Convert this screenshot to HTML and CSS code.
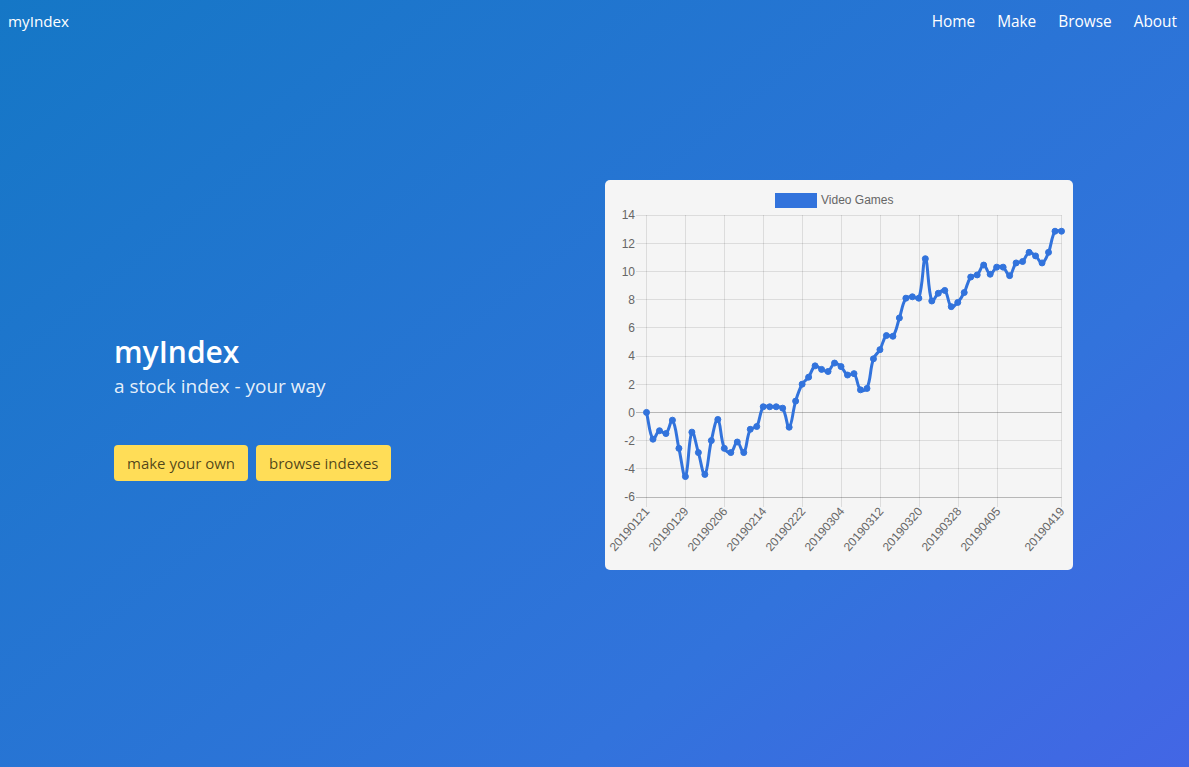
FILE: index.html
```html
<!DOCTYPE html>
<html lang="en">
<head>
<meta charset="utf-8">
<title>myIndex</title>
<link rel="stylesheet" href="styles.css">
</head>
<body>
<div class="hero">
  <nav class="navbar">
    <a class="brand" href="#">myIndex</a>
    <div class="nav-end">
      <a class="nav-item" href="#">Home</a>
      <a class="nav-item" href="#">Make</a>
      <a class="nav-item" href="#">Browse</a>
      <a class="nav-item" href="#">About</a>
    </div>
  </nav>
  <main class="hero-body">
    <div class="container">
      <div class="column intro">
        <h1 class="title">myIndex</h1>
        <h2 class="subtitle">a stock index - your way</h2>
        <div class="buttons">
          <a class="button" href="#">make your own</a>
          <a class="button" href="#">browse indexes</a>
        </div>
      </div>
      <div class="column">
        <div class="chart-card">
          <svg class="chart" id="chart" width="468" height="390" viewBox="0 0 468 390">
            <g class="legend">
              <rect x="171.5" y="14.5" width="39" height="12" class="legend-box"/>
              <text x="216" y="24" class="chart-text">Video Games</text>
            </g>
            <g class="grid">
              <line x1="31" y1="35.5" x2="456.5" y2="35.5"/>
              <line x1="31" y1="63.5" x2="456.5" y2="63.5"/>
              <line x1="31" y1="91.5" x2="456.5" y2="91.5"/>
              <line x1="31" y1="119.5" x2="456.5" y2="119.5"/>
              <line x1="31" y1="147.5" x2="456.5" y2="147.5"/>
              <line x1="31" y1="176.5" x2="456.5" y2="176.5"/>
              <line x1="31" y1="204.5" x2="456.5" y2="204.5"/>
              <line x1="31" y1="260.5" x2="456.5" y2="260.5"/>
              <line x1="31" y1="288.5" x2="456.5" y2="288.5"/>
              <line x1="41.5" y1="35" x2="41.5" y2="327"/>
              <line x1="80.5" y1="35" x2="80.5" y2="327"/>
              <line x1="119.5" y1="35" x2="119.5" y2="327"/>
              <line x1="158.5" y1="35" x2="158.5" y2="327"/>
              <line x1="197.5" y1="35" x2="197.5" y2="327"/>
              <line x1="236.5" y1="35" x2="236.5" y2="327"/>
              <line x1="275.5" y1="35" x2="275.5" y2="327"/>
              <line x1="314.5" y1="35" x2="314.5" y2="327"/>
              <line x1="353.5" y1="35" x2="353.5" y2="327"/>
              <line x1="392.5" y1="35" x2="392.5" y2="327"/>
              <line x1="456.5" y1="35" x2="456.5" y2="327"/>
            </g>
            <g class="axis-dark">
              <line x1="31" y1="232.5" x2="456.5" y2="232.5"/>
              <line x1="31" y1="317.5" x2="456.5" y2="317.5"/>
            </g>
            <g class="y-labels chart-text">
              <text x="30" y="39.3">14</text>
              <text x="30" y="67.5">12</text>
              <text x="30" y="95.7">10</text>
              <text x="30" y="123.9">8</text>
              <text x="30" y="152.1">6</text>
              <text x="30" y="180.3">4</text>
              <text x="30" y="208.5">2</text>
              <text x="30" y="236.7">0</text>
              <text x="30" y="264.9">-2</text>
              <text x="30" y="293.1">-4</text>
              <text x="30" y="321.3">-6</text>
            </g>
            <g class="x-labels chart-text">
              <text transform="translate(42 329) rotate(-49)" y="4">20190121</text>
              <text transform="translate(81 329) rotate(-49)" y="4">20190129</text>
              <text transform="translate(120 329) rotate(-49)" y="4">20190206</text>
              <text transform="translate(159 329) rotate(-49)" y="4">20190214</text>
              <text transform="translate(198 329) rotate(-49)" y="4">20190222</text>
              <text transform="translate(237 329) rotate(-49)" y="4">20190304</text>
              <text transform="translate(276 329) rotate(-49)" y="4">20190312</text>
              <text transform="translate(315 329) rotate(-49)" y="4">20190320</text>
              <text transform="translate(354 329) rotate(-49)" y="4">20190328</text>
              <text transform="translate(393 329) rotate(-49)" y="4">20190405</text>
              <text transform="translate(457 329) rotate(-49)" y="4">20190419</text>
            </g>
            <g id="series" class="series"></g>
          </svg>
        </div>
      </div>
    </div>
  </main>
</div>
<script src="script.js"></script>
</body>
</html>
```

FILE: styles.css
```css
* { box-sizing: border-box; }
html, body { margin: 0; padding: 0; }
body {
  font-family: "Segoe UI", "Open Sans", "Noto Sans", sans-serif;
  color: #fff;
}
a { text-decoration: none; color: inherit; }
.hero {
  min-height: 100vh;
  background-image: linear-gradient(141deg, #1577c6 0%, #3273dc 71%, #4366e5 100%);
  display: flex;
  flex-direction: column;
}
.navbar {
  height: 42px;
  display: flex;
  align-items: center;
  justify-content: space-between;
}
.brand {
  padding: 0 8px;
  font-size: 15.2px;
  color: #fff;
}
.nav-end { display: flex; padding-right: 1px; }
.nav-item {
  padding: 0 11px;
  font-size: 15.4px;
  color: #fff;
}
.hero-body {
  padding-top: 138px;
}
.container {
  width: 959px;
  margin: 0 0 0 114px;
  display: flex;
  gap: 23px;
  align-items: flex-start;
}
.column { flex: 0 0 468px; }
.intro { padding-top: 154px; }
.title {
  margin: 0;
  font-size: 30px;
  line-height: 36px;
  font-weight: 600;
  color: #fff;
}
.subtitle {
  margin: 4px 0 0;
  font-size: 19px;
  line-height: 25px;
  font-weight: 400;
  color: rgba(255, 255, 255, 0.9);
}
.buttons {
  margin-top: 46px;
  display: flex;
  gap: 8px;
}
.button {
  display: inline-flex;
  align-items: center;
  height: 36px;
  padding: 0 13px;
  border-radius: 4px;
  background: #ffdd57;
  color: rgba(0, 0, 0, 0.7);
  font-size: 15px;
}
.chart-card {
  width: 468px;
  height: 390px;
  background: #f5f5f5;
  border-radius: 5px;
  overflow: hidden;
}
.chart { display: block; }
.chart-text {
  font-family: "Liberation Sans", Arial, sans-serif;
  font-size: 12px;
  fill: #666;
}
.y-labels text { text-anchor: end; }
.x-labels text { text-anchor: end; }
.legend-box { fill: #3273dc; stroke: #3273dc; stroke-width: 3; }
.grid line { stroke: rgba(0, 0, 0, 0.1); stroke-width: 1; }
.axis-dark line { stroke: rgba(0, 0, 0, 0.25); stroke-width: 1; }
.series path { fill: none; stroke: #3273dc; stroke-width: 3; }
.series circle { fill: #3273dc; stroke: #3273dc; stroke-width: 1; }
```

FILE: script.js
```js
(function () {
  var data = [0, -1.9, -1.3, -1.5, -0.55, -2.55, -4.55, -1.4, -2.85, -4.4,
    -2.0, -0.5, -2.55, -2.85, -2.1, -2.85, -1.2, -1.0, 0.4, 0.4,
    0.4, 0.3, -1.05, 0.8, 2.0, 2.5, 3.3, 3.05, 2.9, 3.5,
    3.25, 2.65, 2.75, 1.6, 1.7, 3.8, 4.45, 5.45, 5.4, 6.7,
    8.1, 8.2, 8.1, 10.9, 7.9, 8.45, 8.65, 7.5, 7.8, 8.5,
    9.6, 9.75, 10.45, 9.8, 10.3, 10.3, 9.7, 10.6, 10.7, 11.35,
    11.1, 10.6, 11.35, 12.85, 12.85];
  var NS = "http://www.w3.org/2000/svg";
  var g = document.getElementById("series");
  var x0 = 41.5, step = 415 / (data.length - 1);
  var pts = data.map(function (v, i) {
    return { x: x0 + i * step, y: 35 + (14 - v) * 14.1 };
  });
  var t = 0.4;
  var cps = pts.map(function (p, i) {
    var prev = pts[i - 1] || p, next = pts[i + 1] || p;
    var d01 = Math.hypot(p.x - prev.x, p.y - prev.y);
    var d12 = Math.hypot(next.x - p.x, next.y - p.y);
    var s01 = d01 / (d01 + d12 || 1), s12 = d12 / (d01 + d12 || 1);
    var fa = t * s01, fb = t * s12;
    return {
      px: p.x - fa * (next.x - prev.x), py: p.y - fa * (next.y - prev.y),
      nx: p.x + fb * (next.x - prev.x), ny: p.y + fb * (next.y - prev.y)
    };
  });
  var d = "M" + pts[0].x.toFixed(2) + " " + pts[0].y.toFixed(2);
  for (var i = 1; i < pts.length; i++) {
    d += " C" + cps[i - 1].nx.toFixed(2) + " " + cps[i - 1].ny.toFixed(2) + " " +
      cps[i].px.toFixed(2) + " " + cps[i].py.toFixed(2) + " " +
      pts[i].x.toFixed(2) + " " + pts[i].y.toFixed(2);
  }
  var path = document.createElementNS(NS, "path");
  path.setAttribute("d", d);
  g.appendChild(path);
  pts.forEach(function (p) {
    var c = document.createElementNS(NS, "circle");
    c.setAttribute("cx", p.x.toFixed(2));
    c.setAttribute("cy", p.y.toFixed(2));
    c.setAttribute("r", "3");
    g.appendChild(c);
  });
})();
```
